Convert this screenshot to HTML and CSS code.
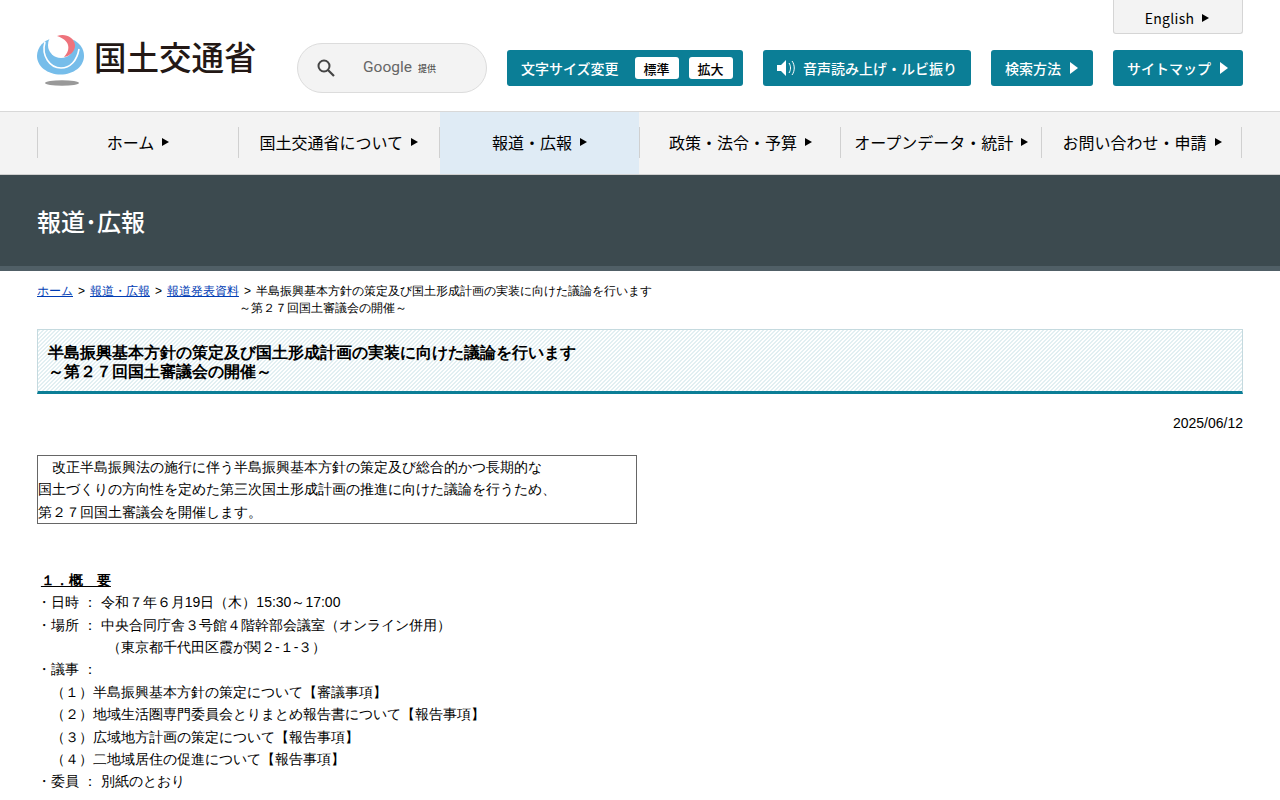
FILE: index.html
```html
<!DOCTYPE html>
<html lang="ja">
<head>
<meta charset="utf-8">
<title>国土交通省</title>
<link rel="stylesheet" href="styles.css">
</head>
<body>
<header class="site-header">
  <div class="header-inner">
    <a class="logo">
      <svg class="logo-mark" width="48" height="52" viewBox="0 0 48 52">
        <ellipse cx="25" cy="49" rx="17" ry="2.800" fill="#999"/>
        <path d="M17 3.500C7 6 0 13 0 22c0 10.500 10.500 18.500 23.500 18.500S47 32.500 47 22c0-5.500-2.500-10-6-13-7-6-14-7-24-5.500z" fill="#76bdea"/>
        <circle cx="24" cy="11" r="13" fill="#fff"/>
        <path d="M8 8C4 22 13 34 24 34c9 0 16-7 18-19" fill="none" stroke="#fff" stroke-width="1.600"/>
        <path d="M20 2C28-1 37 3 38 11c.5 6-5 11-11 12 4-4 5-8 4-12-1-4-5-7-11-9z" fill="#ee737c"/>
      </svg>
      <span class="logo-text">国土交通省</span>
    </a>
    <div class="search">
      <svg class="search-icon" width="18" height="18" viewBox="0 0 18 18"><circle cx="7" cy="7" r="5.500" fill="none" stroke="#444" stroke-width="2"/><path d="M11 11l6 6" stroke="#444" stroke-width="2.200"/></svg>
      <span class="google">Google</span><span class="provided">提供</span>
    </div>
    <div class="tools">
      <a class="english">English<i class="arrow dark"></i></a>
      <div class="tool-row">
        <div class="tool size-tool">
          <span>文字サイズ変更</span>
          <b class="size-btn first">標準</b><b class="size-btn">拡大</b>
        </div>
        <a class="tool voice-tool">
          <svg width="18" height="16" viewBox="0 0 18 16"><path d="M0 5h4l5-5v16l-5-5H0z" fill="#fff"/><path d="M12 3c2 3 2 7 0 10M15 1c3 4 3 10 0 14" fill="none" stroke="#fff"/></svg>
          <span>音声読み上げ・ルビ振り</span>
        </a>
        <a class="tool method-tool">検索方法<i class="arrow white"></i></a>
        <a class="tool map-tool">サイトマップ<i class="arrow white"></i></a>
      </div>
    </div>
  </div>
</header>
<nav class="global-nav">
  <ul class="nav-list">
    <li class="nav-item">ホーム<i class="arrow dark"></i></li>
    <li class="nav-item">国土交通省について<i class="arrow dark"></i></li>
    <li class="nav-item active">報道・広報<i class="arrow dark"></i></li>
    <li class="nav-item">政策・法令・予算<i class="arrow dark"></i></li>
    <li class="nav-item">オープンデータ・統計<i class="arrow dark"></i></li>
    <li class="nav-item">お問い合わせ・申請<i class="arrow dark"></i></li>
  </ul>
</nav>
<div class="page-band"><div class="page-title">報道･広報</div></div>
<main class="content">
  <div class="breadcrumb">
    <div><a>ホーム</a><span class="sep"> &gt; </span><a>報道・広報</a><span class="sep"> &gt; </span><a>報道発表資料</a><span class="sep"> &gt; </span>半島振興基本方針の策定及び国土形成計画の実装に向けた議論を行います</div>
    <div class="crumb-sub">～第２７回国土審議会の開催～</div>
  </div>
  <h1 class="headline">半島振興基本方針の策定及び国土形成計画の実装に向けた議論を行います<br>～第２７回国土審議会の開催～</h1>
  <p class="date">2025/06/12</p>
  <div class="summary">　改正半島振興法の施行に伴う半島振興基本方針の策定及び総合的かつ長期的な<br>国土づくりの方向性を定めた第三次国土形成計画の推進に向けた議論を行うため、<br>第２７回国土審議会を開催します。</div>
  <div class="body-text">
    <div>&nbsp;<strong class="section-title">１．概　要</strong></div>
    <div>・日時 ： 令和７年６月19日（木）15:30～17:00</div>
    <div>・場所 ： 中央合同庁舎３号館４階幹部会議室（オンライン併用）</div>
    <div>　　　　　（東京都千代田区霞が関２-１-３）</div>
    <div>・議事 ：</div>
    <div>　（１）半島振興基本方針の策定について【審議事項】</div>
    <div>　（２）地域生活圏専門委員会とりまとめ報告書について【報告事項】</div>
    <div>　（３）広域地方計画の策定について【報告事項】</div>
    <div>　（４）二地域居住の促進について【報告事項】</div>
    <div>・委員 ： 別紙のとおり</div>
  </div>
</main>
</body>
</html>
```
FILE: styles.css
```css
* { box-sizing: border-box; }
html, body { margin: 0; padding: 0; }
body { font-family: "Liberation Sans", sans-serif; font-size: 14px; color: #000; background: #fff; overflow-x: hidden; text-spacing-trim: space-all; }
a { color: inherit; text-decoration: none; }
.site-header { height: 111px; padding: 0 37px; }
.header-inner { display: flex; height: 100%; }
.logo { display: flex; align-items: flex-start; width: 260px; padding-top: 34px; }
.logo-mark { flex: none; }
.logo-text { margin-left: 9px; margin-top: -4px; font: 500 32.500px/52px "Noto Sans CJK JP", sans-serif; color: #231815; white-space: nowrap; letter-spacing: 0; }
.search { display: flex; align-items: center; width: 190px; height: 50px; margin-top: 43px; padding-left: 19px; background: #f3f3f3; border: 1px solid #dcdcdc; border-radius: 25px; }
.search-icon { flex: none; }
.google { margin: -3px 0 0 28px; font: 15.500px "Roboto", sans-serif; color: #666; }
.provided { margin-left: 6px; font: 500 9px "Noto Sans CJK JP", sans-serif; color: #555; }
.tools { display: flex; flex-direction: column; align-items: flex-end; margin-left: 20px; flex: 1; }
.english { display: flex; align-items: center; justify-content: center; width: 130px; height: 34px; padding-top: 2px; padding-right: 2px; background: #f3f3f3; border: 1px solid #d5d5d5; border-top: 0; border-radius: 0 0 3px 3px; font: 14px "Noto Sans CJK JP", sans-serif; letter-spacing: .3px; }
.tool-row { display: flex; gap: 20px; margin-top: 16px; }
.tool { display: flex; align-items: center; justify-content: center; height: 36px; background: #0b7e96; border-radius: 3px; color: #fff; font: 500 14px "Noto Sans CJK JP", sans-serif; white-space: nowrap; }
.size-tool { width: 236px; justify-content: flex-start; padding-left: 14px; }
.size-btn { display: flex; align-items: center; justify-content: center; width: 44px; height: 22px; margin-left: 10px; background: #fff; border-radius: 3px; color: #000; font-weight: 500; font-size: 13px; }
.size-btn.first { margin-left: 16px; }
.voice-tool { width: 208px; gap: 8px; }
.method-tool { width: 102px; padding-right: 1px; }
.map-tool { width: 130px; padding-right: 1px; }
.arrow { display: inline-block; width: 0; height: 0; border-style: solid; border-width: 4.500px 0 4.500px 7px; border-color: transparent; margin-left: 8px; }
.arrow.dark { border-left-color: #000; }
.arrow.white { border-left-color: #fff; border-width: 6px 0 6px 8px; margin-left: 9px; }
.global-nav { height: 64px; padding: 0 37px; background: #f3f3f3; border-top: 1px solid #d8d8d8; border-bottom: 1px solid #d0d0d0; }
.nav-list { display: flex; width: 1205px; height: 100%; margin: 0; padding: 0; list-style: none; background: linear-gradient(#d0d0d0, #d0d0d0) right 15px / 1px 31px no-repeat; }
.nav-item { position: relative; display: flex; align-items: center; justify-content: center; flex: 1; padding: 0 0 2px 1px; font: 16px "Noto Sans CJK JP", sans-serif; white-space: nowrap; }
.nav-item::before { content: ""; position: absolute; left: 0; top: 15px; width: 1px; height: 31px; background: #d0d0d0; }
.nav-item.active { background: linear-gradient(#dfebf5, #dfebf5) 1px 0 / 100% 100% no-repeat; }
.page-band { height: 96px; background: #3c4a4f; border-bottom: 5px solid #505f66; padding: 28px 37px 0; }
.page-title { color: #fff; font: 500 24px/36px "Noto Sans CJK JP", sans-serif; }
.content { padding: 0 37px; }
.breadcrumb { margin-top: 12px; font-size: 12px; line-height: 17px; }
.breadcrumb a { color: #003cb4; text-decoration: underline; }
.sep { margin: 0 1.650px; }
.crumb-sub { margin-left: 202px; }
.headline { margin: 12px 0 0; padding: 13px 10px 0; height: 65px; font-size: 16px; line-height: 19px; font-weight: bold; border: 1px solid #c5dadf; border-bottom: 3px solid #0b7e96; background: linear-gradient(135deg, #e2eff2 0 37%, #fff 37% 50%, #e2eff2 50% 87%, #fff 87% 100%) 0 0 / 4px 4px; }
.date { margin: 20px 0 0; text-align: right; line-height: 18px; }
.summary { width: 600px; margin-top: 23px; border: 1px solid #666; line-height: 22.400px; }
.body-text { margin-top: 44.500px; line-height: 22.400px; }
.section-title { text-decoration: underline; }
```
